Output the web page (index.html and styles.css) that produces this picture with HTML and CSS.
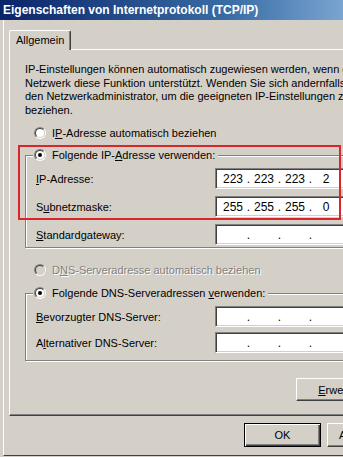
FILE: index.html
```html
<!DOCTYPE html>
<html lang="de">
<head>
<meta charset="utf-8">
<title>Eigenschaften von Internetprotokoll (TCP/IP)</title>
<link rel="stylesheet" href="styles.css">
</head>
<body>
<div class="window">
  <div class="titlebar">Eigenschaften von Internetprotokoll (TCP/IP)</div>
  <div class="client">
    <div class="tabs"><div class="tab">Allgemein</div></div>
    <div class="panel">
      <p class="desc">IP-Einstellungen können automatisch zugewiesen werden, wenn das<br>Netzwerk diese Funktion unterstützt. Wenden Sie sich andernfalls an<br>den Netzwerkadministrator, um die geeigneten IP-Einstellungen zu<br>beziehen.</p>
      <div class="radio-row"><span class="radio"></span><span>I<u>P</u>-Adresse automatisch beziehen</span></div>
      <fieldset class="group group-ip">
        <legend><span class="radio checked"></span><span>Folgende IP-<u>A</u>dresse verwenden:</span></legend>
        <div class="field-row">
          <span class="label"><u>I</u>P-Adresse:</span>
          <div class="ipbox"><span class="oct">223</span><span class="dot">.</span><span class="oct">223</span><span class="dot">.</span><span class="oct">223</span><span class="dot">.</span><span class="oct">2</span></div>
        </div>
        <div class="field-row">
          <span class="label">S<u>u</u>bnetzmaske:</span>
          <div class="ipbox"><span class="oct">255</span><span class="dot">.</span><span class="oct">255</span><span class="dot">.</span><span class="oct">255</span><span class="dot">.</span><span class="oct">0</span></div>
        </div>
        <div class="field-row">
          <span class="label"><u>S</u>tandardgateway:</span>
          <div class="ipbox"><span class="oct"></span><span class="dot">.</span><span class="oct"></span><span class="dot">.</span><span class="oct"></span><span class="dot">.</span><span class="oct"></span></div>
        </div>
      </fieldset>
      <div class="radio-row radio-row-dns disabled"><span class="radio"></span><span>D<u>N</u>S-Serveradresse automatisch beziehen</span></div>
      <fieldset class="group group-dns">
        <legend><span class="radio checked"></span><span>Folgende DNS-Serveradressen <u>v</u>erwenden:</span></legend>
        <div class="field-row">
          <span class="label"><u>B</u>evorzugter DNS-Server:</span>
          <div class="ipbox"><span class="oct"></span><span class="dot">.</span><span class="oct"></span><span class="dot">.</span><span class="oct"></span><span class="dot">.</span><span class="oct"></span></div>
        </div>
        <div class="field-row">
          <span class="label">A<u>l</u>ternativer DNS-Server:</span>
          <div class="ipbox"><span class="oct"></span><span class="dot">.</span><span class="oct"></span><span class="dot">.</span><span class="oct"></span><span class="dot">.</span><span class="oct"></span></div>
        </div>
      </fieldset>
      <div class="adv-row"><button class="btn btn-adv"><u>E</u>rweitert...</button></div>
      <div class="highlight"></div>
    </div>
    <div class="button-row">
      <button class="btn default">OK</button>
      <button class="btn">Abbrechen</button>
    </div>
  </div>
</div>
</body>
</html>
```
FILE: styles.css
```css
* { box-sizing: border-box; }
html, body { margin: 0; padding: 0; }
body {
  width: 343px;
  height: 457px;
  overflow: hidden;
  background: #d4d0c8;
  font-family: "Liberation Sans", Arial, sans-serif;
  font-size: 11px;
  color: #000;
}
u { text-decoration: underline; text-underline-offset: 1px; }

.window {
  width: 420px;
  height: 457px;
  display: flex;
  flex-direction: column;
}
.titlebar {
  height: 20px;
  flex: none;
  background: linear-gradient(to right, #0a246a 0%, #3a6ea5 55%, #a6caf0 100%);
  color: #fff;
  font-weight: bold;
  font-size: 12px;
  line-height: 20px;
  padding-left: 3px;
  white-space: nowrap;
}
.client {
  height: 436px;
  flex: none;
  margin-left: 3px;
  border-left: 1px solid #fff;
  border-bottom: 1px solid #404040;
  padding: 10px 0 0 5px;
  display: flex;
  flex-direction: column;
}

.tabs { height: 19px; display: flex; }
.tab {
  position: relative;
  z-index: 1;
  width: 62px;
  height: 20px;
  background: #d4d0c8;
  border-top: 1px solid #fff;
  border-left: 1px solid #fff;
  border-right: 1px solid #404040;
  border-radius: 2px 2px 0 0;
  box-shadow: inset -1px 0 0 #808080;
  padding-left: 6px;
  line-height: 18px;
  white-space: nowrap;
}
.panel {
  position: relative;
  width: 405px;
  height: 367px;
  flex: none;
  border-top: 1px solid #fff;
  border-left: 1px solid #fff;
  border-right: 1px solid #404040;
  border-bottom: 1px solid #404040;
  box-shadow: inset -1px -1px 0 #808080;
  padding: 13px 0 0 15px;
}
.desc {
  margin: 0;
  line-height: 13.5px;
  white-space: nowrap;
}

.radio-row {
  height: 16px;
  margin-top: 8px;
  padding-left: 9px;
  display: flex;
  align-items: center;
  gap: 6px;
  white-space: nowrap;
}
.radio-row-dns { margin-top: 14px; }
.disabled { color: #808080; text-shadow: 1px 1px 0 #fff; }

.radio {
  position: relative;
  width: 12px;
  height: 12px;
  flex: none;
  border-radius: 50%;
  border: 1px solid;
  border-color: #808080 #fff #fff #808080;
}
.radio::before {
  content: "";
  position: absolute;
  inset: 0;
  border-radius: 50%;
  border: 1px solid;
  border-color: #404040 #d4d0c8 #d4d0c8 #404040;
  background: #fff;
}
.disabled .radio::before { background: #d4d0c8; }
.radio.checked::after {
  content: "";
  position: absolute;
  left: 3px;
  top: 3px;
  width: 4px;
  height: 4px;
  border-radius: 50%;
  background: #000;
}

.group {
  width: 345px;
  margin: 6px 0 0 0;
  padding: 5px 0 2px 0;
  border: 1px solid #808080;
  box-shadow: inset 1px 1px 0 #fff, 1px 1px 0 #fff;
  min-width: 0;
}
.group-dns { margin-top: 7px; padding-bottom: 7px; }
.group legend {
  margin-left: 7px;
  padding: 0 3px 0 1px;
  height: 16px;
  display: flex;
  align-items: center;
  gap: 6px;
  white-space: nowrap;
  background: #d4d0c8;
}
.field-row {
  height: 21px;
  margin-left: 10px;
  display: flex;
  align-items: center;
}
.group-ip .field-row + .field-row { margin-top: 7px; }
.group-dns .field-row + .field-row { margin-top: 5px; }
.label { width: 179px; flex: none; white-space: nowrap; }
.ipbox {
  width: 145px;
  height: 21px;
  flex: none;
  background: #fff;
  border: 1px solid;
  border-color: #808080 #fff #fff #808080;
  box-shadow: inset 1px 1px 0 #404040, inset -1px -1px 0 #d4d0c8;
  padding-left: 4px;
  display: flex;
  align-items: center;
  font-size: 12px;
}
.oct { width: 26px; text-align: center; }
.dot { width: 5px; text-align: center; }

.adv-row { margin-top: 17px; padding-left: 271px; display: flex; }
.btn {
  width: 77px;
  height: 23px;
  flex: none;
  font-family: "Liberation Sans", Arial, sans-serif;
  font-size: 11px;
  color: #000;
  background: #d4d0c8;
  border: 1px solid;
  border-color: #fff #404040 #404040 #fff;
  box-shadow: inset -1px -1px 0 #808080;
  padding: 0;
  white-space: nowrap;
}
.btn-adv { width: 97px; }
.btn.default {
  border: 1px solid #000;
  box-shadow: inset 1px 1px 0 #fff, inset -1px -1px 0 #404040, inset -2px -2px 0 #808080;
}
.button-row {
  margin-top: 7px;
  padding-left: 235px;
  display: flex;
  gap: 6px;
}
.button-row .btn { height: 24px; }

.highlight {
  position: absolute;
  left: 8px;
  top: 95px;
  width: 323px;
  height: 75px;
  border: 2px solid #d9262a;
  pointer-events: none;
}
```
